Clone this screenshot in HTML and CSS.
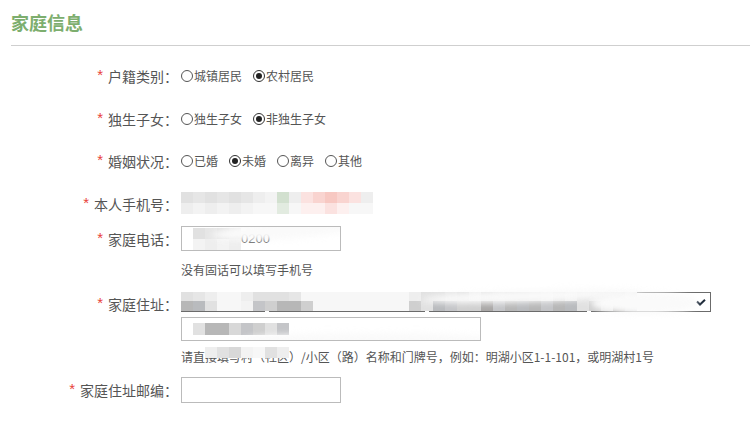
FILE: index.html
```html
<!DOCTYPE html>
<html lang="zh-CN">
<head>
<meta charset="utf-8">
<title>家庭信息</title>
<link rel="stylesheet" href="styles.css">
</head>
<body>
<div class="header"><h2 class="title">家庭信息</h2></div>
<div class="form">
  <div class="row r1">
    <div class="label"><span class="req">*</span>户籍类别：</div>
    <div class="ctrl radios">
      <label class="radio"><span class="dot"></span>城镇居民</label>
      <label class="radio"><span class="dot on"></span>农村居民</label>
    </div>
  </div>
  <div class="row r2">
    <div class="label"><span class="req">*</span>独生子女：</div>
    <div class="ctrl radios">
      <label class="radio"><span class="dot"></span>独生子女</label>
      <label class="radio"><span class="dot on"></span>非独生子女</label>
    </div>
  </div>
  <div class="row r3">
    <div class="label"><span class="req">*</span>婚姻状况：</div>
    <div class="ctrl radios">
      <label class="radio"><span class="dot"></span>已婚</label>
      <label class="radio"><span class="dot on"></span>未婚</label>
      <label class="radio"><span class="dot"></span>离异</label>
      <label class="radio"><span class="dot"></span>其他</label>
    </div>
  </div>
  <div class="row r4">
    <div class="label"><span class="req">*</span>本人手机号：</div>
    <div class="ctrl">
      <div class="mosaic m16">
        <i class="c3"></i><i class="c2"></i><i class="c3"></i><i class="c2"></i><i class="c3"></i><i class="c2"></i><i class="c5"></i><i class="c6"></i><i class="cg"></i><i class="c5"></i><i class="cr1"></i><i class="cr2"></i><i class="cr3"></i><i class="cr2"></i><i class="cr1"></i><i class="c5"></i>
        <i class="c5"></i><i class="c6"></i><i class="c5"></i><i class="c6"></i><i class="c5"></i><i class="c6"></i><i class="c7"></i><i class="c7"></i><i class="cg2"></i><i class="c7"></i><i class="cr4"></i><i class="cr4"></i><i class="cr1"></i><i class="cr4"></i><i class="c7"></i><i class="c7"></i>
      </div>
    </div>
  </div>
  <div class="row r5">
    <div class="label tall"><span class="req">*</span>家庭电话：</div>
    <div class="ctrl">
      <div class="field w160">
        <div class="mosaic m4 inline">
          <i class="c3"></i><i class="c2"></i><i class="c3"></i><i class="c2"></i>
          <i class="c6"></i><i class="c5"></i><i class="c6"></i><i class="c5"></i>
        </div>
        <span class="val">0200</span>
        <span class="smear s1"></span>
      </div>
      <div class="hint h1">没有固话可以填写手机号</div>
    </div>
  </div>
  <div class="row r6">
    <div class="label"><span class="req">*</span>家庭住址：</div>
    <div class="ctrl">
      <div class="selects">
        <div class="select sw1"></div>
        <div class="select sw2"></div>
        <div class="select sw3"></div>
        <div class="select sw4">
          <svg class="arrow" width="10" height="7" viewBox="0 0 10 7"><polyline points="1,2.5 4,5.5 9,0.8" fill="none" stroke="#1e2a3a" stroke-width="2"/></svg>
        </div>
        <div class="mosaic band">
          <i class="c3"></i><i class="c2"></i><i class="c5"></i><i class="c7"></i><i class="c7"></i><i class="c5"></i><i class="c3"></i><i class="c3"></i><i class="c3"></i><i class="c2"></i><i class="c7"></i><i class="c7"></i><i class="c7"></i><i class="c7"></i><i class="c7"></i><i class="c7"></i><i class="c7"></i><i class="c7"></i><i class="c7"></i><i class="c5"></i><i class="c3"></i><i class="c3"></i><i class="c2"></i><i class="c3"></i><i class="c5"></i><i class="c3"></i><i class="c2"></i><i class="c3"></i><i class="c3"></i><i class="c2"></i><i class="c5"></i><i class="c3"></i><i class="c5"></i><i class="c3"></i><i class="c2"></i><i class="c3"></i><i class="c3"></i><i class="c5"></i>
          <i class="d2"></i><i class="d3"></i><i class="c3"></i><i class="c7"></i><i class="c7"></i><i class="c6"></i><i class="d4"></i><i class="d5"></i><i class="d2"></i><i class="d2"></i><i class="d5"></i><i class="c7"></i><i class="c7"></i><i class="c7"></i><i class="c7"></i><i class="c7"></i><i class="c7"></i><i class="c7"></i><i class="c7"></i><i class="d5"></i><i class="c3"></i><i class="d3"></i><i class="d4"></i><i class="d5"></i><i class="d5"></i><i class="d1"></i><i class="d4"></i><i class="d2"></i><i class="d3"></i><i class="d2"></i><i class="d4"></i><i class="d2"></i><i class="d3"></i><i class="c3"></i><i class="d5"></i><i class="c3"></i><i class="d1"></i><i class="d4"></i>
        </div>
        <span class="smear s2"></span>
        <span class="smear s3"></span>
      </div>
      <div class="field w300 mt5">
        <div class="mosaic m8 inline">
          <i class="c3"></i><i class="d2"></i><i class="d2"></i><i class="c4"></i><i class="d4"></i><i class="d5"></i><i class="c3"></i><i class="d4"></i>
        </div>
        <span class="smear s4"></span>
      </div>
      <div class="hint h2">请直接填写村（社区）/小区（路）名称和门牌号，例如：明湖小区1-1-101，或明湖村1号
        <span class="mosaic m7 cover"><i class="c5"></i><i class="c3"></i><i class="c4"></i><i class="c6"></i><i class="c7"></i><i class="c3"></i><i class="c5"></i></span>
      </div>
    </div>
  </div>
  <div class="row r7">
    <div class="label tall2"><span class="req">*</span>家庭住址邮编：</div>
    <div class="ctrl">
      <div class="field w160 h26"></div>
    </div>
  </div>
</div>
</body>
</html>
```
FILE: styles.css
```css
* { box-sizing: border-box; }
body {
  margin: 0;
  background: #fff;
  font-family: "Microsoft YaHei", "Noto Sans CJK SC", "Noto Sans", sans-serif;
  font-size: 13px;
  color: #555;
}
.header {
  margin-left: 11px;
  padding: 10px 0 11px;
  border-bottom: 1px solid #cfcfcf;
}
.title {
  margin: 0;
  font-size: 18px;
  line-height: 24px;
  font-weight: bold;
  color: #7dae6e;
}
.form { margin-top: 18px; }
.row {
  display: grid;
  grid-template-columns: 178px auto;
  column-gap: 3px;
  align-items: start;
}
.r2 { margin-top: 19px; }
.r3 { margin-top: 18px; }
.r4 { margin-top: 19px; }
.r5 { margin-top: 10px; }
.r6 { margin-top: 12px; }
.r7 { margin-top: 10px; }
.label {
  text-align: right;
  font-size: 14px;
  line-height: 24px;
  white-space: nowrap;
  display: flex;
  justify-content: flex-end;
  align-items: center;
  height: 24px;
}
.label.tall { height: 25px; }
.label.tall2 { height: 26px; }
.req {
  color: #e8413a;
  font-family: "Liberation Sans", Arial, sans-serif;
  font-size: 15px;
  margin-right: 5px;
  position: relative;
  top: -1px;
}
.ctrl { position: relative; }
.radios {
  display: flex;
  align-items: center;
  height: 24px;
}
.radio {
  display: inline-flex;
  align-items: center;
  margin-right: 11px;
  font-size: 12px;
  line-height: 24px;
  color: #555;
}
.dot {
  width: 12px;
  height: 12px;
  border: 1px solid #555;
  border-radius: 50%;
  margin-right: 1px;
  display: inline-flex;
  align-items: center;
  justify-content: center;
}
.dot.on { border-color: #333; }
.dot.on::after {
  content: "";
  width: 6px;
  height: 6px;
  border-radius: 50%;
  background: #222;
}
.mosaic {
  display: grid;
  grid-auto-rows: 11px;
}
.mosaic i { display: block; }
.m16 { grid-template-columns: repeat(16, 12px); filter: blur(0.6px); }
.m4 { grid-template-columns: repeat(4, 12px); }
.m8 { grid-template-columns: repeat(8, 12px); grid-auto-rows: 12px; }
.m7 { grid-template-columns: repeat(7, 12px); }
.inline { display: inline-grid; }
.c2 { background: #e6e6e6; }
.c3 { background: #e1e1e1; }
.c4 { background: #d8d8d8; }
.c5 { background: #eeeeee; }
.c6 { background: #f3f3f3; }
.c7 { background: #f7f7f7; }
.cg { background: #d2e0cf; }
.cg2 { background: #e2ebe0; }
.cr1 { background: #fbe2e0; }
.cr2 { background: #f9d4d0; }
.cr3 { background: #f7c8c2; }
.cr4 { background: #fdf0ef; }
.d1 { background: #a9a7a6; }
.d2 { background: #b7b7b7; }
.d3 { background: #b9bbbe; }
.d4 { background: #c4c5c8; }
.d5 { background: #cfcfcf; }
.field {
  position: relative;
  height: 25px;
  border: 1px solid #bbb;
  background: #fff;
  display: flex;
  align-items: center;
  padding-left: 11px;
  overflow: hidden;
}
.w160 { width: 160px; }
.w300 { width: 300px; height: 24px; }
.h26 { height: 26px; }
.mt5 { margin-top: 5px; }
.val {
  font-family: "Liberation Sans", Arial, sans-serif;
  font-size: 13px;
  color: #555;
}
.hint {
  font-size: 12px;
  line-height: 20px;
  color: #555;
  white-space: nowrap;
  position: relative;
}
.h1 { margin-top: 9px; }
.h2 { margin-top: 6px; }
.selects {
  position: relative;
  display: flex;
  gap: 4px;
  height: 20px;
  width: 530px;
}
.select {
  height: 20px;
  border: 1px solid #6b6b6b;
  background: #fff;
  position: relative;
}
.sw1 { width: 84px; }
.sw2 { width: 156px; }
.sw3 { width: 158px; }
.sw4 { width: 120px; }
.arrow {
  position: absolute;
  right: 4px;
  top: 6px;
}
.band {
  position: absolute;
  left: 0;
  top: 0;
  grid-template-columns: repeat(38, 12px);
  grid-auto-rows: 9px 10px;
  filter: blur(0.5px);
}
.smear {
  position: absolute;
  background: #fafafa;
  border-radius: 50%;
  filter: blur(3px);
}
.s1 { left: 30px; top: -6px; width: 150px; height: 18px; transform: rotate(-4deg); }
.s2 { left: 240px; top: -2px; width: 220px; height: 12px; transform: rotate(-2deg); }
.s3 { left: 410px; top: 0; width: 106px; height: 22px; }
.s4 { left: 60px; top: 15px; width: 260px; height: 14px; }
.cover {
  position: absolute;
  left: 24px;
  top: 0;
  filter: blur(0.6px);
}
```
